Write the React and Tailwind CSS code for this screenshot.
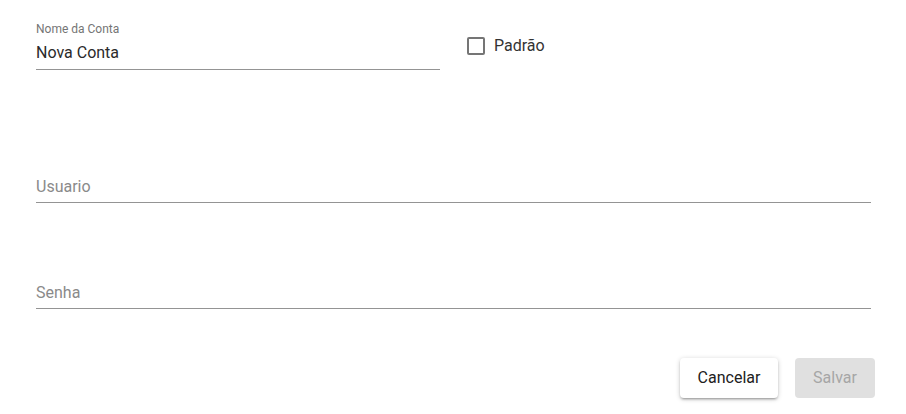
export default function App() {
  return (
    <div className="w-[906px] h-[414px] bg-white font-['Roboto',sans-serif] text-[#212121] overflow-hidden">
      {/* FIRST ROW */}
      <div className="flex items-start pl-[36px] pr-[35px]">
        <div className="w-[404px] border-b border-[#949494] pb-[7px]">
          <div className="mt-[23px] text-[12px] leading-[12px] text-[#757575]">Nome da Conta</div>
          <div className="mt-[8px] h-[19px] text-[16px] leading-[19px] text-[#2a2a2a]">Nova Conta</div>
        </div>
        <label className="flex items-center ml-[27px] mt-[37px]">
          <span className="w-[18px] h-[18px] border-2 border-[#757575] rounded-[2px]"></span>
          <span className="ml-[9px] text-[16px] leading-[18px] text-[#333]">Padrão</span>
        </label>
      </div>

      {/* USUARIO */}
      <div className="ml-[36px] mr-[35px] mt-[107px] border-b border-[#949494] pb-[6px]">
        <div className="h-[19px] text-[16px] leading-[19px] text-[#8a8a8a]">Usuario</div>
      </div>

      {/* SENHA */}
      <div className="ml-[36px] mr-[35px] mt-[80px] border-b border-[#949494] pb-[6px]">
        <div className="h-[19px] text-[16px] leading-[19px] text-[#8a8a8a]">Senha</div>
      </div>

      {/* ACTIONS */}
      <div className="flex justify-end gap-[17px] pr-[31px] mt-[49px]">
        <button className="w-[98px] h-[40px] rounded-[4px] bg-white text-[16px] text-[#212121] shadow-[0_1px_5px_rgba(0,0,0,0.2),0_2px_2px_rgba(0,0,0,0.14),0_3px_1px_-2px_rgba(0,0,0,0.12)]">
          Cancelar
        </button>
        <button disabled className="w-[80px] h-[40px] rounded-[4px] bg-[#e0e0e0] text-[16px] text-[#a6a6a6]">
          Salvar
        </button>
      </div>
    </div>
  );
}
